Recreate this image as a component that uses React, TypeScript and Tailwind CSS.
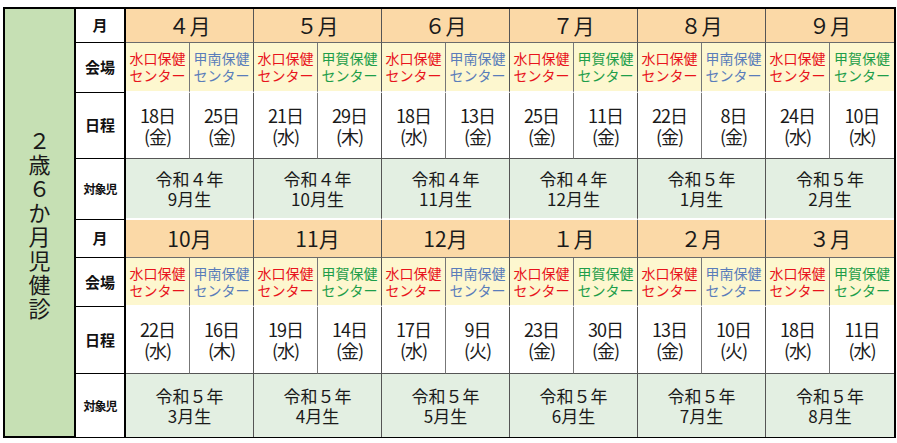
import React from 'react';

type Venue = 'minakuchi' | 'konan' | 'koka';

interface MonthBlock {
  month: string;
  venues: [Venue, Venue];
  dates: [string, string][];
  target: [string, string];
}

const venueName: Record<Venue, string> = {
  minakuchi: '水口保健',
  konan: '甲南保健',
  koka: '甲賀保健',
};

const venueColor: Record<Venue, string> = {
  minakuchi: 'text-[#e8141c]',
  konan: 'text-[#5a7dba]',
  koka: 'text-[#1e9e4a]',
};

const firstHalf: MonthBlock[] = [
  { month: '４月', venues: ['minakuchi', 'konan'], dates: [['18日', '(金)'], ['25日', '(金)']], target: ['令和４年', '9月生'] },
  { month: '５月', venues: ['minakuchi', 'koka'], dates: [['21日', '(水)'], ['29日', '(木)']], target: ['令和４年', '10月生'] },
  { month: '６月', venues: ['minakuchi', 'konan'], dates: [['18日', '(水)'], ['13日', '(金)']], target: ['令和４年', '11月生'] },
  { month: '７月', venues: ['minakuchi', 'koka'], dates: [['25日', '(金)'], ['11日', '(金)']], target: ['令和４年', '12月生'] },
  { month: '８月', venues: ['minakuchi', 'konan'], dates: [['22日', '(金)'], ['8日', '(金)']], target: ['令和５年', '1月生'] },
  { month: '９月', venues: ['minakuchi', 'koka'], dates: [['24日', '(水)'], ['10日', '(水)']], target: ['令和５年', '2月生'] },
];

const secondHalf: MonthBlock[] = [
  { month: '10月', venues: ['minakuchi', 'konan'], dates: [['22日', '(水)'], ['16日', '(木)']], target: ['令和５年', '3月生'] },
  { month: '11月', venues: ['minakuchi', 'koka'], dates: [['19日', '(水)'], ['14日', '(金)']], target: ['令和５年', '4月生'] },
  { month: '12月', venues: ['minakuchi', 'konan'], dates: [['17日', '(水)'], ['9日', '(火)']], target: ['令和５年', '5月生'] },
  { month: '１月', venues: ['minakuchi', 'koka'], dates: [['23日', '(金)'], ['30日', '(金)']], target: ['令和５年', '6月生'] },
  { month: '２月', venues: ['minakuchi', 'konan'], dates: [['13日', '(金)'], ['10日', '(火)']], target: ['令和５年', '7月生'] },
  { month: '３月', venues: ['minakuchi', 'koka'], dates: [['18日', '(水)'], ['11日', '(水)']], target: ['令和５年', '8月生'] },
];

const Label: React.FC<{ text: string; small?: boolean; last?: boolean }> = ({ text, small, last }) => (
  <div
    className={`flex items-center justify-center bg-white border-r-2 border-black font-bold text-[#111] ${
      small ? 'text-[12px] tracking-[-1px]' : 'text-[15px]'
    } ${last ? '' : 'border-b border-b-black'}`}
  >
    {text}
  </div>
);

// vertical separators: light between the two venues, darker between months
const sepClass = (i: number, j: number) =>
  j === 0 ? 'border-r border-r-[#777]' : i < 5 ? 'border-r border-r-[#555]' : '';

const Section: React.FC<{ blocks: MonthBlock[]; last?: boolean }> = ({ blocks, last }) => (
  <>
    {/* 月 */}
    <Label text="月" />
    {blocks.map((b, i) => (
      <div
        key={'m' + i}
        className={`col-span-2 flex items-center justify-center bg-[#fbd9a7] border-b border-[#6b6b6b] text-[21px] text-[#1a1a1a] ${
          i < 5 ? 'border-r border-r-[#555]' : ''
        }`}
      >
        {b.month}
      </div>
    ))}

    {/* 会場 */}
    <Label text="会場" />
    {blocks.map((b, i) =>
      b.venues.map((v, j) => (
        <div
          key={'v' + i + j}
          className={`flex flex-col items-center justify-center bg-[#fdf7cf] border-b-2 border-white text-[14px] leading-[17px] ${
            venueColor[v]
          } ${sepClass(i, j)}`}
        >
          <span>{venueName[v]}</span>
          <span>センター</span>
        </div>
      ))
    )}

    {/* 日程 */}
    <Label text="日程" />
    {blocks.map((b, i) =>
      b.dates.map((d, j) => (
        <div
          key={'d' + i + j}
          className={`flex flex-col items-center justify-center bg-white border-b border-[#555] text-[18px] leading-[21px] text-[#1a1a1a] tracking-[-1px] ${sepClass(
            i,
            j
          )}`}
        >
          <span>{d[0]}</span>
          <span>{d[1]}</span>
        </div>
      ))
    )}

    {/* 対象児 */}
    <Label text="対象児" small last={last} />
    {blocks.map((b, i) => (
      <div
        key={'t' + i}
        className={`col-span-2 flex flex-col items-center justify-center bg-[#e3efe2] text-[17px] leading-[20px] text-[#1a1a1a] ${
          i < 5 ? 'border-r border-r-[#555]' : ''
        } ${last ? '' : 'border-b-2 border-b-white'}`}
      >
        <span>{b.target[0]}</span>
        <span>{b.target[1]}</span>
      </div>
    ))}
  </>
);

const title = ['２', '歳', '６', 'か', '月', '児', '健', '診'];

export default function App() {
  return (
    <div
      className="w-[897px] h-[443px] bg-white pt-[7px] pl-[3px]"
      style={{ fontFamily: '"Noto Sans CJK JP", "Noto Sans", sans-serif' }}
    >
      <div className="flex w-[893px] h-[431px] border-2 border-black">
        <div className="w-[71px] shrink-0 flex flex-col items-center justify-center bg-[#c6e0b4] border-r-2 border-black">
          {title.map((c, i) => (
            <div key={i} className="text-[22px] leading-[24px] text-[#1a1a1a]">
              {c}
            </div>
          ))}
        </div>
        <div className="grid grid-cols-[50px_repeat(12,64px)] grid-rows-[34px_50px_66px_61px_38px_49px_67px_63px]">
          <Section blocks={firstHalf} />
          <Section blocks={secondHalf} last />
        </div>
      </div>
    </div>
  );
}
